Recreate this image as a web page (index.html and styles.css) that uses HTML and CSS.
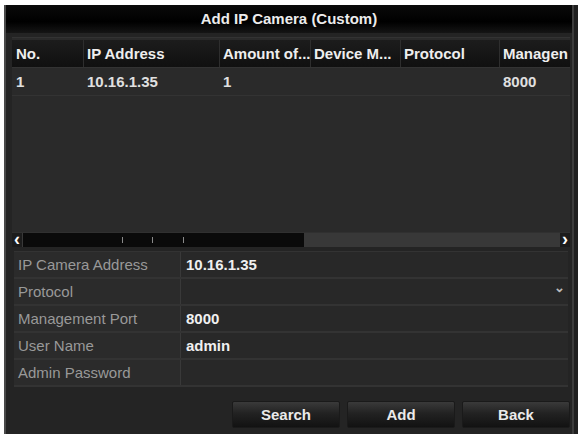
FILE: index.html
```html
<!DOCTYPE html>
<html lang="en">

<head>
    <meta charset="UTF-8">
    <meta name="viewport" content="width=device-width, initial-scale=1.0">
    <title>Add IP Camera (Custom)</title>
    <link rel="stylesheet" href="styles.css">
</head>

<body>
    <div class="screen">
        <div class="dialog">
            <div class="title-bar">Add IP Camera (Custom)</div>

            <!-- camera list -->
            <div class="cam-table">
                <div class="row head">
                    <div class="cell">No.</div>
                    <div class="cell">IP Address</div>
                    <div class="cell">Amount of...</div>
                    <div class="cell">Device M...</div>
                    <div class="cell">Protocol</div>
                    <div class="cell">Managen</div>
                </div>
                <div class="row">
                    <div class="cell">1</div>
                    <div class="cell">10.16.1.35</div>
                    <div class="cell">1</div>
                    <div class="cell"></div>
                    <div class="cell"></div>
                    <div class="cell">8000</div>
                </div>
                <div class="table-fill"></div>
                <div class="hscroll">
                    <div class="arrow">&#8249;</div>
                    <div class="thumb">
                        <span class="tick"></span>
                        <span class="tick"></span>
                        <span class="tick"></span>
                    </div>
                    <div class="track"></div>
                    <div class="arrow">&#8250;</div>
                </div>
            </div>

            <!-- camera settings -->
            <div class="form">
                <div class="field">
                    <div class="label">IP Camera Address</div>
                    <div class="value">10.16.1.35</div>
                </div>
                <div class="field">
                    <div class="label">Protocol</div>
                    <div class="value select"><span class="caret">&#8964;</span></div>
                </div>
                <div class="field">
                    <div class="label">Management Port</div>
                    <div class="value">8000</div>
                </div>
                <div class="field">
                    <div class="label">User Name</div>
                    <div class="value">admin</div>
                </div>
                <div class="field">
                    <div class="label">Admin Password</div>
                    <div class="value"></div>
                </div>
            </div>

            <div class="buttons">
                <button>Search</button>
                <button>Add</button>
                <button>Back</button>
            </div>
        </div>
    </div>
</body>

</html>
```

FILE: styles.css
```css
body {
    margin: 0;
    background-color: #ffffff;
    font-family: "Liberation Sans", Arial, sans-serif;
    font-size: 15px;
    font-weight: bold;
    color: #e0e0e0;
}

.screen {
    margin: 5px 0 0 4px;
    height: 429px;
    background-color: #1f1f1f;
}

.dialog {
    width: 566px;
    height: 429px;
    background-color: #242424;
    border-left: 2px solid #4a4a4a;
    border-right: 2px solid #3c3c3c;
}

.title-bar {
    height: 28px;
    line-height: 28px;
    text-align: center;
    color: #ececec;
    background: linear-gradient(#0a0a0a, #000000 60%, #151515);
}

.cam-table {
    margin: 4px 0 0 6px;
    width: 558px;
    border-top: 1px solid #333333;
    padding-top: 2px;
    background-color: #2a2a2a;
    display: flex;
    flex-direction: column;
    height: 207px;
}

.row {
    display: grid;
    grid-template-columns: 71px 136px 91px 90px 99px 71px;
    height: 27px;
    border-bottom: 1px solid #333333;
}

.row .cell {
    padding-left: 4px;
    line-height: 28px;
    white-space: nowrap;
    overflow: hidden;
}

.row.head {
    background: linear-gradient(#1c1c1c, #101010);
    color: #eeeeee;
}

.row.head .cell {
    border-left: 1px solid #2e2e2e;
    padding-left: 3px;
}

.row.head .cell:first-child {
    border-left: none;
    padding-left: 4px;
}

.table-fill {
    flex: 1;
}

.hscroll {
    display: flex;
    height: 14px;
    background-color: #383838;
    border-top: 1px solid #303030;
}

.hscroll .arrow {
    width: 10px;
    line-height: 13px;
    font-size: 18px;
    text-align: center;
    color: #ffffff;
    background-color: #1c1c1c;
}

.thumb {
    width: 281px;
    margin-left: 1px;
    background-color: #0a0a0a;
    position: relative;
}

.tick {
    position: absolute;
    top: 4px;
    width: 1px;
    height: 6px;
    background-color: #8a8a8a;
}

.tick:nth-child(1) { left: 99px; }
.tick:nth-child(2) { left: 129px; }
.tick:nth-child(3) { left: 160px; }

.track {
    flex: 1;
}

.form {
    margin: 4px 0 0 8px;
    width: 554px;
    border-top: 1px solid #333333;
}

.field {
    display: grid;
    grid-template-columns: 167px 1fr;
    height: 27px;
    border-bottom: 2px solid #333333;
    box-sizing: border-box;
}

.label {
    padding-left: 4px;
    line-height: 25px;
    color: #999999;
    font-weight: normal;
    background-color: #2b2b2b;
    border-right: 1px solid #393939;
}

.value {
    padding-left: 5px;
    line-height: 25px;
    color: #f0f0f0;
    background-color: #282828;
}

.value.select {
    position: relative;
}

.caret {
    position: absolute;
    right: 3px;
    top: -4px;
    font-size: 13px;
    color: #bbbbbb;
}

.buttons {
    display: flex;
    justify-content: flex-end;
    gap: 7px;
    margin: 14px 2px 0 0;
}

button {
    width: 108px;
    height: 27px;
    font-family: inherit;
    font-size: 15px;
    font-weight: bold;
    color: #eaeaea;
    background: linear-gradient(#3a3a3a, #222222 45%, #121212);
    border: 1px solid #1a1a1a;
    border-radius: 2px;
    padding: 0;
}
```
